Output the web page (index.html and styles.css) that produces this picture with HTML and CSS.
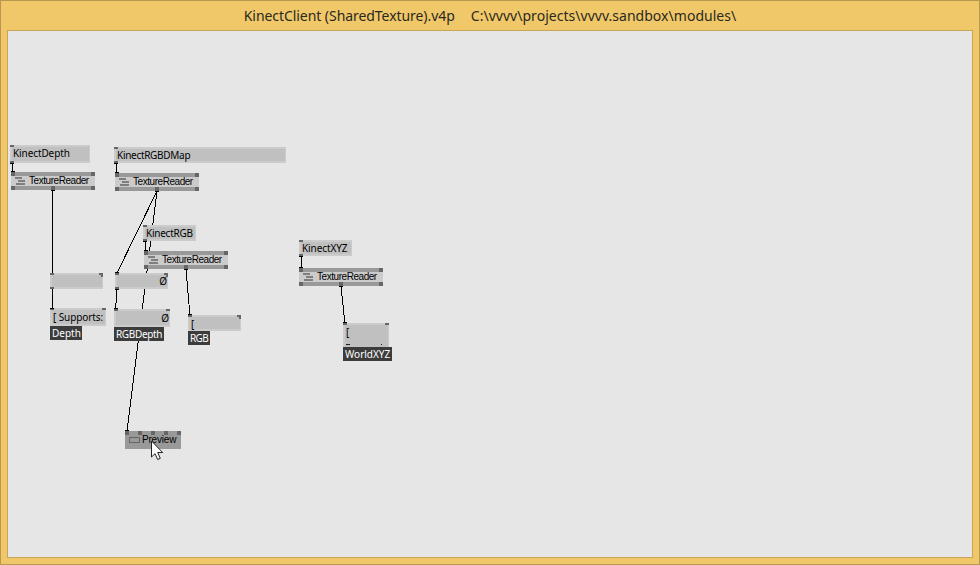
FILE: index.html
```html
<!DOCTYPE html>
<html lang="en">
<head>
<meta charset="utf-8">
<title>KinectClient (SharedTexture).v4p</title>
<link rel="stylesheet" href="styles.css">
</head>
<body>
<main class="window">
  <header class="titlebar"><span class="file">KinectClient (SharedTexture).v4p</span><span class="path">C:\vvvv\projects\vvvv.sandbox\modules\</span></header>
  <section class="canvas"></section>
  <svg class="wires" width="980" height="565" shape-rendering="crispEdges">
    <path d="M12.5 163V172M116.5 163V173M145.5 241V251M301.5 256V268M52.5 190V273M52.5 289V309M157 191L117 273M157 191L127 431M117 289L115.500 310M186 269L190 316M341 286L345 324"/>
  </svg>

  <div class="io depth-name"><span>KinectDepth</span><i class="pin tl"></i><i class="pin bl"></i></div>
  <div class="io map-name"><span>KinectRGBDMap</span><i class="pin tl"></i><i class="pin bl"></i></div>
  <div class="io rgb-name"><span>KinectRGB</span><i class="pin tl"></i><i class="pin bl"></i></div>
  <div class="io xyz-name"><span>KinectXYZ</span><i class="pin tl"></i><i class="pin bl"></i></div>

  <div class="node reader-depth"><div class="pins"><i></i><i></i></div><div class="body"><svg width="10" height="8"><path d="M0 1h7M3 4h7M1 7h9"/></svg><span>TextureReader</span></div><div class="pins"><i></i><i></i><i></i></div></div>
  <div class="node reader-map"><div class="pins"><i></i><i></i></div><div class="body"><svg width="10" height="8"><path d="M0 1h7M3 4h7M1 7h9"/></svg><span>TextureReader</span></div><div class="pins"><i></i><i></i><i></i></div></div>
  <div class="node reader-rgb"><div class="pins"><i></i><i></i></div><div class="body"><svg width="10" height="8"><path d="M0 1h7M3 4h7M1 7h9"/></svg><span>TextureReader</span></div><div class="pins"><i></i><i></i><i></i></div></div>
  <div class="node reader-xyz"><div class="pins"><i></i><i></i></div><div class="body"><svg width="10" height="8"><path d="M0 1h7M3 4h7M1 7h9"/></svg><span>TextureReader</span></div><div class="pins"><i></i><i></i><i></i></div></div>

  <div class="io depth-value"><i class="pin tl"></i><i class="pin tr hook"></i><i class="pin bl"></i></div>
  <div class="io map-value"><span class="end">Ø</span><i class="pin tl"></i><i class="pin tr hook"></i><i class="pin bl"></i></div>
  <div class="io depth-info"><span>[ Supports:</span><i class="pin tl"></i><i class="pin tr"></i></div>
  <div class="io map-info"><span class="end">Ø</span><i class="pin tl"></i><i class="pin tr"></i></div>
  <div class="io rgb-info"><span>[</span><i class="pin tl"></i><i class="pin tr hook"></i></div>
  <div class="io xyz-info"><span>[</span><i class="pin tl"></i><i class="pin tr"></i><b class="sliver"></b></div>

  <div class="label label-depth">Depth</div>
  <div class="label label-map">RGBDepth</div>
  <div class="label label-rgb">RGB</div>
  <div class="label label-xyz">WorldXYZ</div>

  <div class="node preview"><div class="pins"><i></i><i></i><i></i><i></i><i></i></div><div class="body"><b class="screen"></b><span>Preview</span></div></div>

  <svg class="wires" width="980" height="565" shape-rendering="crispEdges">
    <path d="M10 163.500h4M11 171.500h4M114 163.500h4M115 172.500h4M143 241.500h4M144 250.500h4M299 256.500h4M299 267.500h4M51 190.500h4M50 308.500h4M155 191.500h4M115 272.500h4M115 289.500h4M114 308.500h4M184 269.500h4M188 314.500h4M339 286.500h4M343 322.500h4M125 430.500h4"/>
  </svg>
  <svg class="cursor" width="14" height="21" viewBox="0 0 14 21"><path d="M1.500 1V17L5 13.700L7.700 19.500L10.300 18.300L7.700 12.500H12.700Z"/></svg>
</main>
</body>
</html>
```
FILE: styles.css
```css
* { box-sizing: border-box; }
body { margin: 0; overflow: hidden; }
.window {
  position: relative;
  display: flex;
  flex-direction: column;
  width: 980px;
  height: 565px;
  padding: 0 7px 7px;
  background: #f0c869;
  box-shadow: inset 0 0 0 1px #b8994f;
}
.titlebar {
  display: flex;
  justify-content: center;
  gap: 16px;
  height: 30px;
  line-height: 31px;
  font-family: "Noto Sans", sans-serif;
  font-size: 14px;
  color: #2b2820;
  white-space: nowrap;
}
.file { letter-spacing: -0.06px; }
.path { letter-spacing: 0.03px; }
.canvas { flex: 1; background: #e6e6e6; border: 1px solid #c9a557; }
.wires { position: absolute; left: 0; top: 0; fill: none; stroke: #000; stroke-width: 1; }

.io {
  position: absolute;
  height: 16px;
  background: #c0c0c0;
  border: solid #cbcbcb;
  border-width: 2px 1px 2px 2px;
  font: 10px/12px "Noto Sans", sans-serif;
  color: #000;
  white-space: nowrap;
}
.io span { display: block; padding-left: 1px; letter-spacing: -0.1px; }
.io .end { text-align: right; padding-right: 0; }
.pin { position: absolute; width: 4px; height: 2px; background: #666; }
.tl { left: -2px; top: -2px; }
.bl { left: -2px; bottom: -2px; }
.tr { right: -1px; top: -2px; }
.hook::after { content: ""; position: absolute; right: 0; top: 2px; width: 2px; height: 2px; background: #666; }

.depth-name { left: 10px; top: 145px; width: 80px; height: 18px; line-height: 13px; }
.map-name { left: 114px; top: 147px; width: 172px; }
.map-name span { letter-spacing: -0.3px; }
.rgb-name { left: 143px; top: 225px; width: 53px; }
.rgb-name span { letter-spacing: -0.25px; }
.xyz-name { left: 299px; top: 240px; width: 53px; }
.depth-value { left: 50px; top: 273px; width: 53px; }
.map-value { left: 115px; top: 273px; width: 53px; }
.depth-info { left: 50px; top: 308px; width: 56px; height: 18px; line-height: 15px; }
.map-info { left: 114px; top: 309px; width: 56px; height: 18px; line-height: 15px; }
.rgb-info { left: 188px; top: 315px; width: 53px; line-height: 15px; }
.xyz-info { left: 343px; top: 323px; width: 46px; height: 24px; line-height: 15px; border-bottom: 0; }
.sliver { position: absolute; left: 1px; bottom: 2px; width: 4px; height: 1px; background: #222; }
.sliver::after { content: ""; position: absolute; left: 35px; width: 1px; height: 1px; background: #222; }

.node {
  position: absolute;
  display: flex;
  flex-direction: column;
  width: 84px;
  height: 18px;
  background: #cbcbcb;
  font: 10px/10px "Liberation Sans", sans-serif;
}
.pins { display: flex; justify-content: space-between; height: 4px; background: #999; }
.pins i { width: 4px; height: 4px; background: #666; }
.body { display: flex; flex: 1; align-items: center; gap: 3px; padding-left: 4px; }
.body svg { stroke: #666; stroke-width: 1.500; }
.body span { letter-spacing: -0.45px; white-space: nowrap; color: #000; }
.node:not(.preview) .body { gap: 4px; }
.reader-depth { left: 11px; top: 172px; }
.reader-map { left: 115px; top: 173px; }
.reader-rgb { left: 144px; top: 251px; }
.reader-xyz { left: 299px; top: 268px; }
.preview { left: 125px; top: 431px; width: 56px; background: #999; }
.preview .body { padding: 0 0 4px 4px; gap: 2px; }
.preview .body span { letter-spacing: -0.2px; }
.screen { width: 11px; height: 6px; border: 1px solid #666; }

.label {
  position: absolute;
  height: 14px;
  padding-left: 2px;
  background: #3c3c3c;
  color: #fff;
  font: 10px/15px "Noto Sans", sans-serif;
  white-space: nowrap;
}
.label-depth { left: 50px; top: 326px; width: 32px; }
.label-map { left: 114px; top: 327px; width: 50px; letter-spacing: -0.35px; }
.label-rgb { left: 188px; top: 331px; width: 22px; letter-spacing: -0.6px; }
.label-xyz { left: 343px; top: 347px; width: 49px; }
.cursor { position: absolute; left: 150px; top: 440px; fill: #fff; stroke: #222; stroke-width: 1; }
```
